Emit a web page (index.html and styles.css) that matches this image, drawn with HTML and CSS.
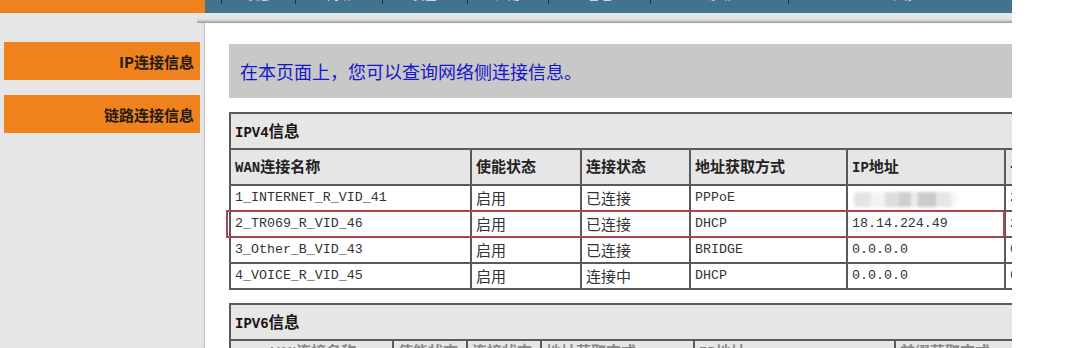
FILE: index.html
```html
<!DOCTYPE html>
<html lang="zh-CN">
<head>
<meta charset="utf-8">
<title>网络侧连接信息</title>
<link rel="stylesheet" href="styles.css">
</head>
<body>
<div class="page">
  <div class="top">
    <div class="brand"></div>
    <div class="nav">
      <div class="nav-item"></div>
      <div class="nav-item"><span>状态</span></div>
      <div class="nav-item"><span>网络</span></div>
      <div class="nav-item"><span>安全</span></div>
      <div class="nav-item"><span>应用</span></div>
      <div class="nav-item"><span>管理</span></div>
      <div class="nav-item"><span>诊断</span></div>
      <div class="nav-item last"><span>帮助</span></div>
    </div>
  </div>
  <div class="body">
    <div class="side">
      <div class="side-item">IP连接信息</div>
      <div class="side-item">链路连接信息</div>
    </div>
    <div class="main">
      <div class="band"></div>
      <div class="content">
        <div class="notice">在本页面上，您可以查询网络侧连接信息。</div>

        <div class="tbl-wrap">
          <table class="tbl v4">
            <colgroup>
              <col class="a1"><col class="a2"><col class="a3"><col class="a4"><col class="a5"><col class="a6">
            </colgroup>
            <tr class="title"><td colspan="6"><span class="mb">IPV4</span>信息</td></tr>
            <tr class="head">
              <td><span class="mb">WAN</span>连接名称</td>
              <td>使能状态</td>
              <td>连接状态</td>
              <td>地址获取方式</td>
              <td><span class="mb">IP</span>地址</td>
              <td>子网掩码</td>
            </tr>
            <tr class="row">
              <td class="m">1_INTERNET_R_VID_41</td>
              <td>启用</td>
              <td>已连接</td>
              <td class="m">PPPoE</td>
              <td><span class="blurred"></span></td>
              <td class="m">255.255.255.255</td>
            </tr>
            <tr class="row">
              <td class="m">2_TR069_R_VID_46</td>
              <td>启用</td>
              <td>已连接</td>
              <td class="m">DHCP</td>
              <td class="m">18.14.224.49</td>
              <td class="m">255.255.255.0</td>
            </tr>
            <tr class="row">
              <td class="m">3_Other_B_VID_43</td>
              <td>启用</td>
              <td>已连接</td>
              <td class="m">BRIDGE</td>
              <td class="m">0.0.0.0</td>
              <td class="m">0.0.0.0</td>
            </tr>
            <tr class="row">
              <td class="m">4_VOICE_R_VID_45</td>
              <td>启用</td>
              <td>连接中</td>
              <td class="m">DHCP</td>
              <td class="m">0.0.0.0</td>
              <td class="m">0.0.0.0</td>
            </tr>
          </table>
          <div class="mark"></div>
        </div>

        <div class="tbl-wrap second">
          <table class="tbl v6">
            <colgroup>
              <col class="b1"><col class="b2"><col class="b3"><col class="b4"><col class="b5"><col class="b6">
            </colgroup>
            <tr class="title"><td colspan="6"><span class="mb">IPV6</span>信息</td></tr>
            <tr class="head">
              <td class="ctr"><span class="mb">WAN</span>连接名称</td>
              <td>使能状态</td>
              <td>连接状态</td>
              <td>地址获取方式</td>
              <td><span class="mb">IP</span>地址</td>
              <td>前缀获取方式</td>
            </tr>
          </table>
        </div>
      </div>
    </div>
  </div>
</div>
</body>
</html>
```

FILE: styles.css
```css
html, body {
  margin: 0;
  padding: 0;
  background: #ffffff;
}

body {
  font-family: "Noto Sans CJK SC", "Liberation Sans", sans-serif;
  color: #222;
}

.page {
  width: 1012px;
  height: 348px;
  overflow: hidden;
}

/* ---------- top bar ---------- */
.top {
  display: flex;
  height: 13px;
}

.brand {
  width: 205px;
  background: #f0821e;
}

.nav {
  flex: 1;
  background: #41738f;
  display: grid;
  grid-template-columns: 17px 74px 87px 85px 81px 102px 138px 1fr;
  overflow: hidden;
}

.nav-item {
  height: 4px;
  border-right: 1px solid #15324a;
  text-align: center;
  color: #dfe6ec;
  font-size: 12px;
}

.nav-item.last {
  border-right: none;
}

.nav-item span {
  display: block;
  line-height: 14px;
  margin-top: -12px;
}

/* ---------- body ---------- */
.body {
  display: flex;
  height: 335px;
}

.side {
  width: 205px;
  flex: none;
  background: #e6e6e6;
  box-shadow: inset -2px 0 2px -1px #bdbdbd;
  padding-top: 29px;
  box-sizing: border-box;
  display: flex;
  flex-direction: column;
  gap: 15px;
}

.side-item {
  margin-left: 4px;
  width: 196px;
  height: 38px;
  flex: none;
  box-sizing: border-box;
  padding-right: 6px;
  background: #f0821e;
  display: flex;
  align-items: center;
  justify-content: flex-end;
  font-size: 15px;
  font-weight: bold;
  color: #221a14;
}

.main {
  flex: 1;
  min-width: 0;
  display: flex;
  flex-direction: column;
}

.band {
  flex: none;
  height: 10px;
  margin-left: -8px;
  background: linear-gradient(#e6e8eb 0%, #dfe2e5 65%, #b9bbbd 85%, #939393 100%);
}

.content {
  flex: none;
  padding: 21px 0 0 24px;
}

.notice {
  height: 54px;
  background: #c8c8c8;
  display: flex;
  align-items: center;
  padding-left: 11px;
  font-size: 18px;
  color: #1616c8;
  white-space: nowrap;
}

/* ---------- tables ---------- */
.tbl-wrap {
  position: relative;
  margin-top: 14px;
}

.tbl-wrap.second {
  margin-top: 13px;
}

.tbl {
  border-collapse: collapse;
  table-layout: fixed;
  font-size: 15px;
  color: #333;
}

.tbl.v4 { width: 895px; }
.tbl.v6 { width: 825px; }

.a1 { width: 241px; }
.a2 { width: 110px; }
.a3 { width: 109px; }
.a4 { width: 157px; }
.a5 { width: 158px; }
.a6 { width: 120px; }

.b1 { width: 163px; }
.b2 { width: 74px; }
.b3 { width: 74px; }
.b4 { width: 153px; }
.b5 { width: 201px; }
.b6 { width: 160px; }

.tbl td {
  border: 2px solid #5a5a5a;
  padding: 0 0 0 4px;
  white-space: nowrap;
  overflow: hidden;
  text-align: left;
}

.tbl .title td {
  height: 31px;
  padding-bottom: 3px;
  background: #e6e6e6;
  font-weight: bold;
  font-size: 15.5px;
  color: #1c1414;
}

.tbl .head td {
  height: 31px;
  padding-bottom: 3px;
  background: #e6e6e6;
  font-weight: bold;
  color: #222;
}

.tbl.v6 .head td {
  padding-top: 0;
  padding-bottom: 0;
  vertical-align: top;
  color: #888;
  line-height: 20px;
}

.tbl .head td.ctr {
  padding-left: 40px;
}

.tbl .row td {
  height: 24px;
  background: #ffffff;
  line-height: 24px;
}

.tbl td.m {
  font-family: "Liberation Mono", monospace;
  font-size: 13.3px;
  color: #333;
}

.mb {
  font-family: "Liberation Mono", monospace;
  font-size: 14px;
  font-weight: bold;
}

.blurred {
  display: inline-block;
  vertical-align: middle;
  margin-left: 2px;
  width: 103px;
  height: 15px;
  background: linear-gradient(90deg,
    #e4e4e4 0 16%,
    #f3f3f3 16% 30%,
    #dddddd 30% 44%,
    #cecece 44% 55%,
    #ececec 55% 62%,
    #cacaca 62% 80%,
    #e6e6e6 80% 94%,
    #f6f6f6 94% 100%);
  filter: blur(1.5px);
  border-radius: 4px;
}

/* annotation box around the highlighted row */
.mark {
  position: absolute;
  left: -3px;
  top: 98px;
  width: 779px;
  height: 28px;
  box-sizing: border-box;
  border: 2px solid #a8464f;
  pointer-events: none;
}
```
